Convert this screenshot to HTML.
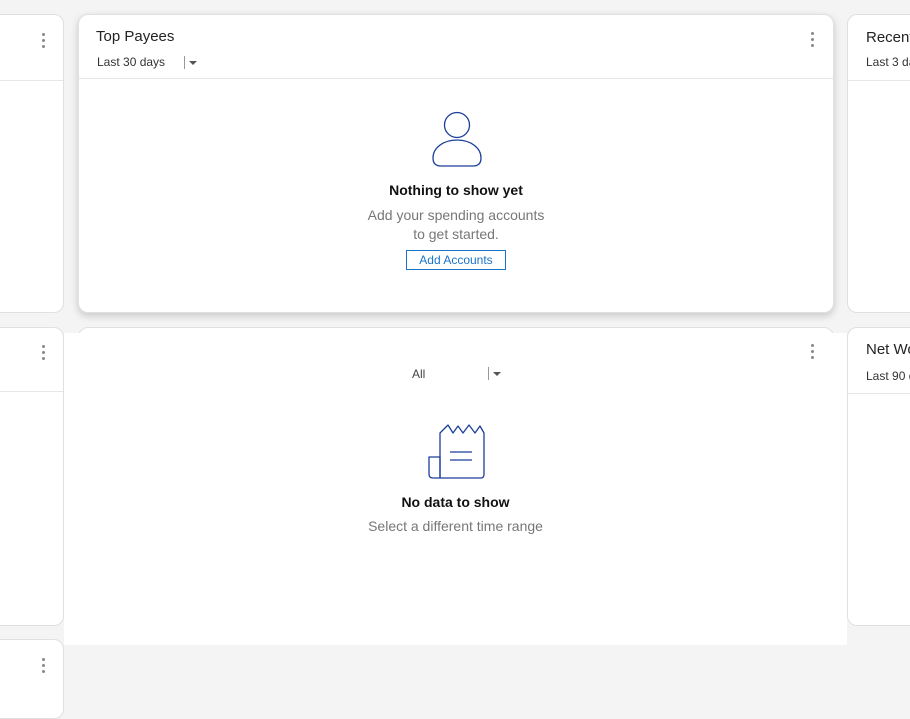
<!DOCTYPE html>
<html><head><style>
body{margin:0;width:910px;height:683px;background:#f4f4f4;position:relative;overflow:hidden;font-family:"Liberation Sans",sans-serif;}
.card{position:absolute;background:#fff;border:1px solid #e0e0e0;border-radius:10px;box-sizing:border-box;overflow:hidden}
.div{position:absolute;left:0;right:0;height:1px;background:#e6e6e6}
.dots{position:absolute;width:3px}
.dots i{display:block;width:3px;height:3px;border-radius:50%;background:#888;margin-bottom:3px}
.t{position:absolute;font-size:15px;color:#222;white-space:nowrap}
.s{position:absolute;font-size:12px;color:#333;white-space:nowrap}
</style></head><body>
<div class="card" style="left:-20px;top:14px;width:84px;height:299px"><div class="div" style="top:65px"></div><div class="dots" style="left:61px;top:18px"><i></i><i></i><i></i></div></div>
<div class="card" style="left:-20px;top:327px;width:84px;height:299px"><div class="div" style="top:63px"></div><div class="dots" style="left:61px;top:17px"><i></i><i></i><i></i></div></div>
<div class="card" style="left:-20px;top:639px;width:84px;height:80px"><div class="dots" style="left:61px;top:18px"><i></i><i></i><i></i></div></div>
<div class="card" style="left:847px;top:14px;width:100px;height:299px"><div class="div" style="top:65px"></div><div class="t" style="left:18px;top:14px">Recent</div><div class="s" style="left:18px;top:40px">Last 3 days</div></div>
<div class="card" style="left:847px;top:327px;width:100px;height:299px"><div class="div" style="top:65px"></div><div class="t" style="left:18px;top:13px">Net Worth</div><div class="s" style="left:18px;top:41px">Last 90 days</div></div>

<div class="card" style="left:78px;top:327px;width:756px;height:40px"></div>
<div style="position:absolute;left:64px;top:333px;width:783px;height:312px;background:#fff">
 <div class="dots" style="left:747px;top:11px"><i></i><i></i><i></i></div>
 <div class="s" style="left:348px;top:34px;color:#444">All</div>
 <div style="position:absolute;left:424px;top:34px;width:1px;height:13px;background:#999"></div>
 <div style="position:absolute;left:429px;top:39px;border-left:4px solid transparent;border-right:4px solid transparent;border-top:4px solid #555"></div>
 <svg style="position:absolute;left:362px;top:89px" width="60" height="60" viewBox="0 0 60 60"><g fill="none" stroke="#1c3f9a" stroke-width="1.3" stroke-linejoin="round"><path d="M3 35 H14 V56 H7 Q3 56 3 52 Z"/><path d="M14 56 H55 Q58 56 58 52 V11 L54 4 L49 11 L43 3 L37 11 L32 4 L27 11 L22 3 L14 11 V56"/><path d="M24 30 H46 M24 38 H46"/></g></svg>
 <div style="position:absolute;left:0;width:783px;top:161px;text-align:center;font-size:14px;font-weight:bold;color:#111">No data to show</div>
 <div style="position:absolute;left:0;width:783px;top:185px;text-align:center;font-size:14px;color:#777">Select a different time range</div>
</div>

<div class="card" style="left:78px;top:14px;width:756px;height:299px;box-shadow:0 3px 8px rgba(0,0,0,.18)">
 <div class="t" style="left:17px;top:13px">Top Payees</div>
 <div class="s" style="left:18px;top:40px">Last 30 days</div>
 <div style="position:absolute;left:105px;top:41px;width:1px;height:13px;background:#999"></div>
 <div style="position:absolute;left:110px;top:46px;border-left:4px solid transparent;border-right:4px solid transparent;border-top:4px solid #555"></div>
 <div class="dots" style="left:732px;top:17px"><i></i><i></i><i></i></div>
 <div class="div" style="top:63px"></div>
 <svg style="position:absolute;left:352px;top:96px" width="52" height="58" viewBox="0 0 52 58"><g fill="none" stroke="#1c3f9a" stroke-width="1.3"><circle cx="26" cy="14" r="12.5"/><path d="M26 29 C40 29 50 37 50 47 Q50 55 42 55 H10 Q2 55 2 47 C2 37 12 29 26 29 Z"/></g></svg>
 <div style="position:absolute;left:0;width:754px;top:167px;text-align:center;font-size:14px;font-weight:bold;color:#111">Nothing to show yet</div>
 <div style="position:absolute;left:0;width:754px;top:191px;text-align:center;font-size:14px;color:#777;line-height:19px">Add your spending accounts<br>to get started.</div>
 <div style="position:absolute;left:327px;top:235px;width:100px;height:20px;border:1px solid #1a73c8;box-sizing:border-box;color:#1a73c8;font-size:12px;text-align:center;line-height:18px">Add Accounts</div>
</div>
</body></html>
